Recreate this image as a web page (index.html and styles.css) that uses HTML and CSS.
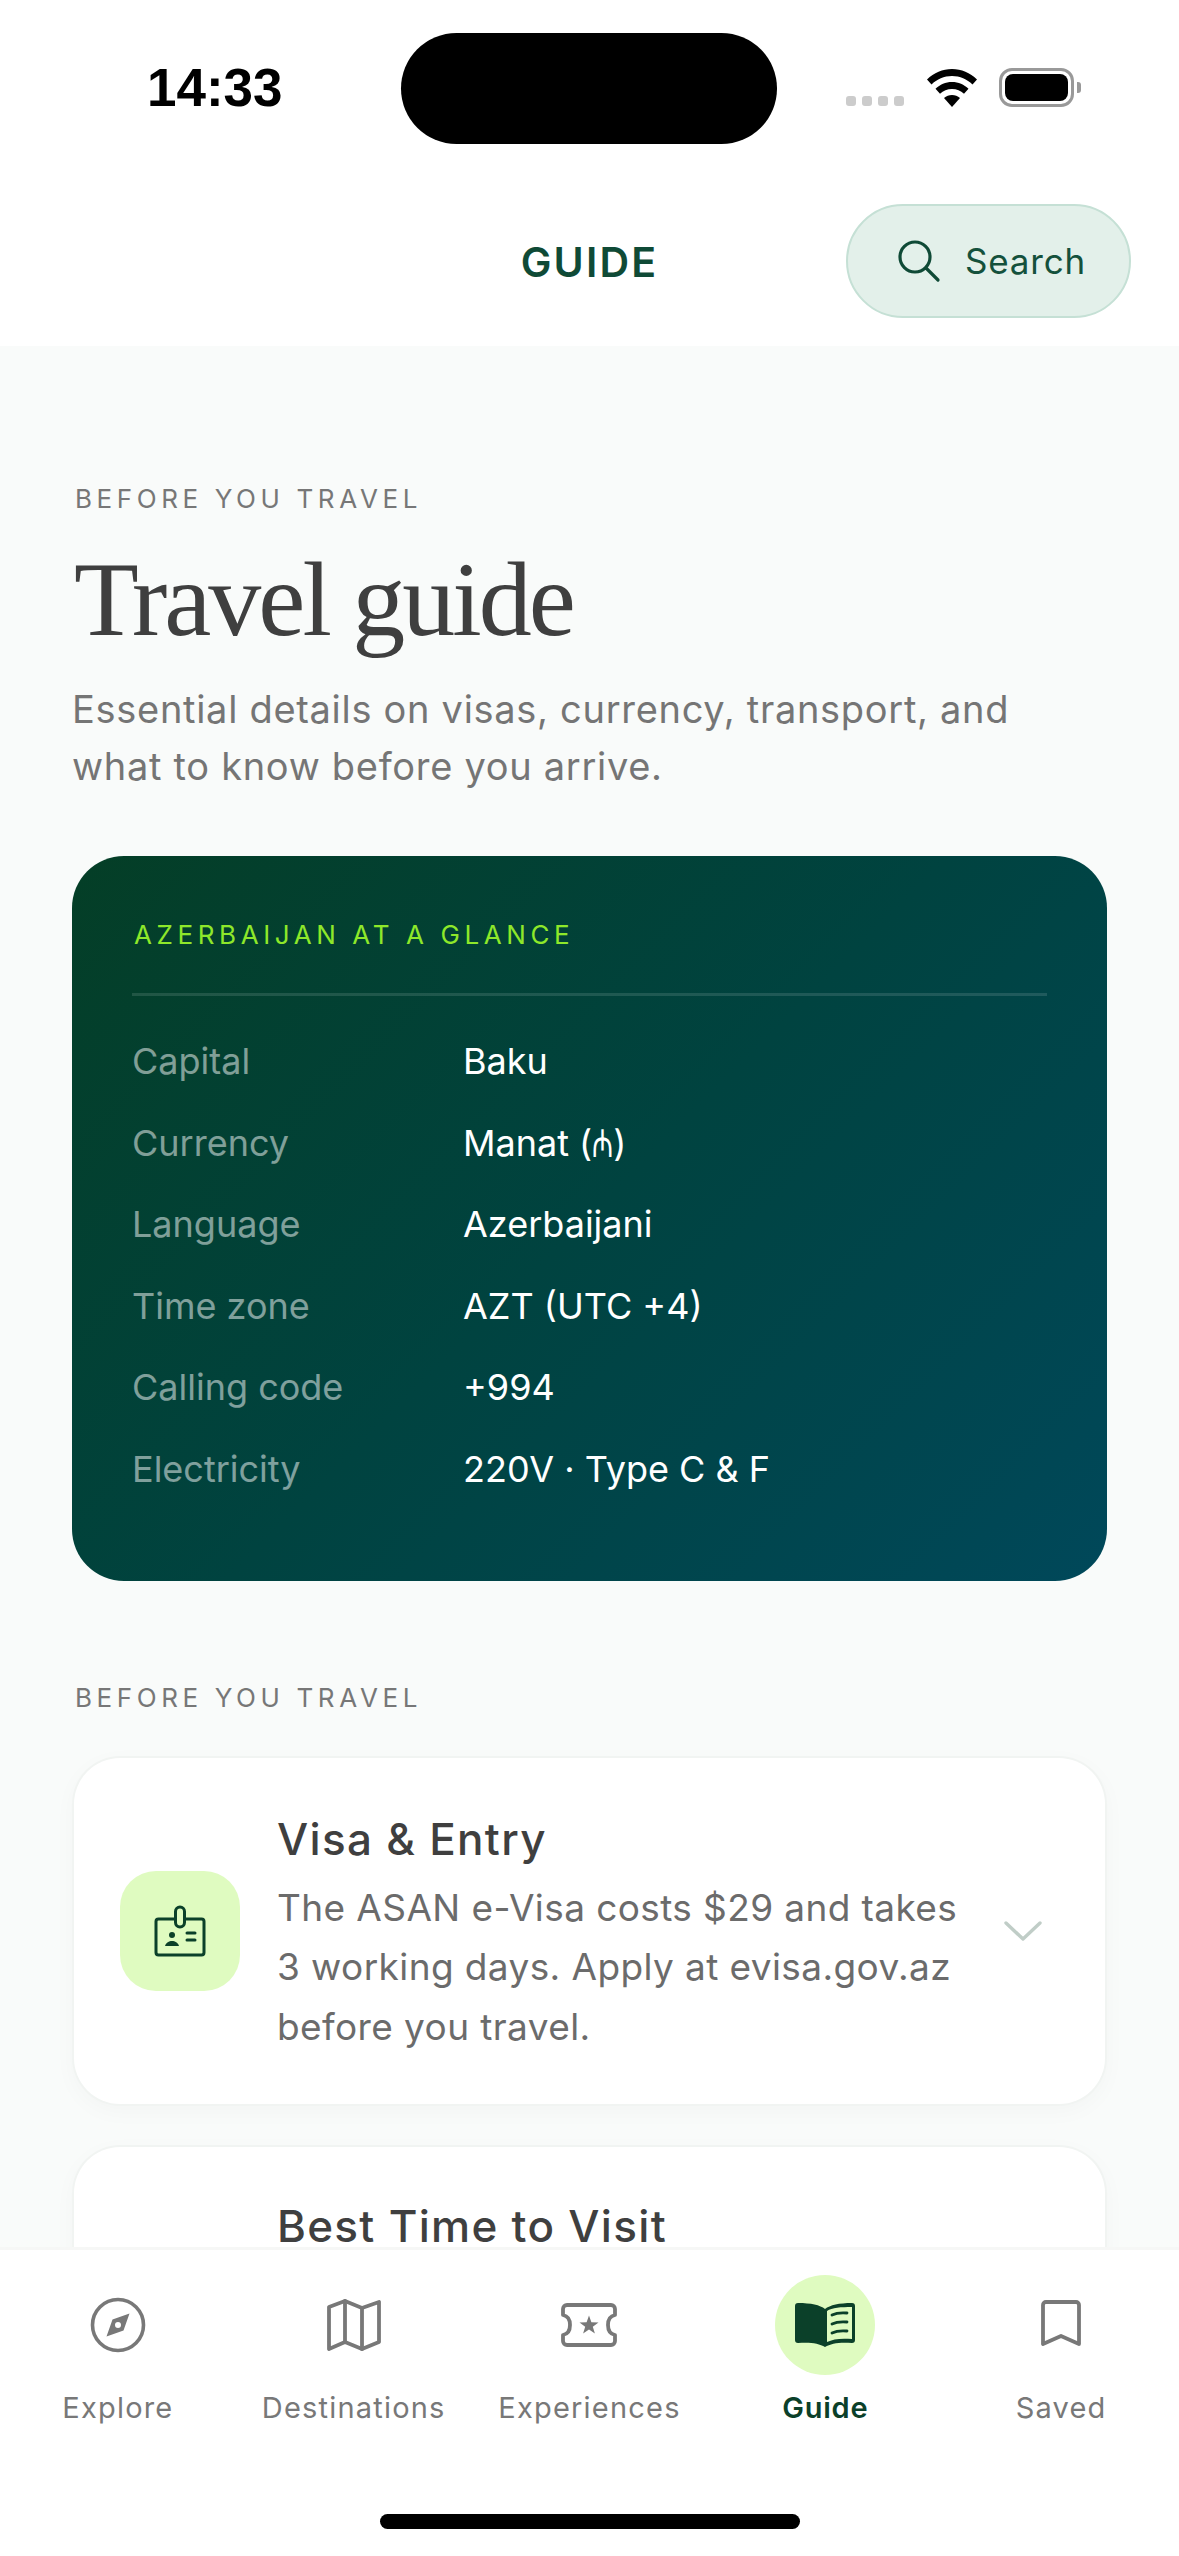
FILE: index.html
```html
<!DOCTYPE html>
<html lang="en">

<head>
    <meta charset="UTF-8">
    <meta name="viewport" content="width=device-width, initial-scale=1.0">
    <title>Guide</title>
    <link rel="stylesheet" href="styles.css">
</head>

<body>
    <div class="phone">
        <!--status bar-->
        <div class="status">
            <span class="time">14:33</span>
            <div class="island"></div>
            <div class="status-icons">
                <div class="dots"><i></i><i></i><i></i><i></i></div>
                <svg class="wifi" width="50" height="38" viewBox="0 0 50 38">
                    <path d="M25 0C15.500 0 7 3.800 0 10.500L4.500 15.500C10 10.200 17 7 25 7S40 10.200 45.500 15.500L50 10.500C43 3.800 34.500 0 25 0Z" />
                    <path d="M25 13C18.500 13 13 15.500 8.500 19.800L13 24.800C16.300 21.700 20.300 20 25 20S33.700 21.700 37 24.800L41.500 19.800C37 15.500 31.500 13 25 13Z" />
                    <path d="M25 26C22 26 19.300 27.100 17 29L25 38L33 29C30.700 27.100 28 26 25 26Z" />
                </svg>
                <div class="battery"><div class="battery-fill"></div></div>
                <div class="battery-nub"></div>
            </div>
        </div>

        <!--header-->
        <header class="header">
            <h1 class="header-title">GUIDE</h1>
            <div class="search">
                <svg width="44" height="44" viewBox="0 0 44 44" fill="none" stroke="#0f4a36" stroke-width="3.200" stroke-linecap="round">
                    <circle cx="18" cy="18" r="15" />
                    <path d="M29 29L41 41" />
                </svg>
                <span>Search</span>
            </div>
        </header>

        <main class="content">
            <p class="eyebrow">BEFORE YOU TRAVEL</p>
            <h2 class="title">Travel guide</h2>
            <p class="lead">Essential details on visas, currency, transport, and what to know before you arrive.</p>

            <!--country facts-->
            <section class="glance">
                <p class="glance-title">AZERBAIJAN AT A GLANCE</p>
                <div class="facts">
                    <div class="fact"><span class="fact-label">Capital</span><span>Baku</span></div>
                    <div class="fact"><span class="fact-label">Currency</span><span>Manat (<span class="manat">₼</span>)</span></div>
                    <div class="fact"><span class="fact-label">Language</span><span>Azerbaijani</span></div>
                    <div class="fact"><span class="fact-label">Time zone</span><span>AZT (UTC +4)</span></div>
                    <div class="fact"><span class="fact-label">Calling code</span><span>+994</span></div>
                    <div class="fact"><span class="fact-label">Electricity</span><span>220V · Type C &amp; F</span></div>
                </div>
            </section>

            <p class="eyebrow section-label">BEFORE YOU TRAVEL</p>

            <div class="item">
                <div class="item-icon">
                    <svg width="52" height="52" viewBox="0 0 52 52" fill="none" stroke="#0b4029" stroke-width="3" stroke-linecap="round" stroke-linejoin="round">
                        <rect x="2" y="14" width="48" height="36" rx="2.500" />
                        <rect x="21.500" y="2" width="9" height="20" rx="4.500" fill="#dffbc0" />
                        <circle cx="18" cy="30" r="3" fill="#0b4029" stroke="none" />
                        <path d="M11 41C12 37.500 15 36 18 36S24 37.500 25 41Z" fill="#0b4029" stroke="none" />
                        <path d="M33 28H41M33 35H41" />
                    </svg>
                </div>
                <div class="item-text">
                    <h3>Visa &amp; Entry</h3>
                    <p>The ASAN e-Visa costs $29 and takes 3 working days. Apply at evisa.gov.az before you travel.</p>
                </div>
                <svg class="chevron" width="38" height="20" viewBox="0 0 38 20" fill="none" stroke="#c0cdc7" stroke-width="3.400" stroke-linecap="round" stroke-linejoin="round">
                    <path d="M2 2L19 18L36 2" />
                </svg>
            </div>

            <div class="item item-next">
                <div class="item-text">
                    <h3>Best Time to Visit</h3>
                </div>
            </div>
        </main>

        <!--tab bar-->
        <nav class="tabs">
            <div class="tab">
                <div class="tab-icon">
                    <svg width="56" height="56" viewBox="0 0 56 56" fill="none" stroke="#787878" stroke-width="3.600">
                        <circle cx="28" cy="28" r="25.500" />
                        <path fill-rule="evenodd" d="M39.500 16.500L33.500 33.500L16.500 39.500L22.500 22.500ZM28 25A3 3 0 1 0 28 31A3 3 0 1 0 28 25Z" fill="#787878" stroke="none" />
                    </svg>
                </div>
                <span>Explore</span>
            </div>
            <div class="tab">
                <div class="tab-icon">
                    <svg width="54" height="52" viewBox="0 0 54 52" fill="none" stroke="#787878" stroke-width="3.800" stroke-linejoin="round" stroke-linecap="round">
                        <path d="M2 8L18 2L35 9L52 3V43L35 50L18 43L2 50Z" />
                        <path d="M18 2V43M35 9V50" />
                    </svg>
                </div>
                <span>Destinations</span>
            </div>
            <div class="tab">
                <div class="tab-icon">
                    <svg width="56" height="46" viewBox="0 0 56 46" fill="none" stroke="#787878" stroke-width="3.800" stroke-linejoin="round">
                        <path d="M6 3H50A4 4 0 0 1 54 7V13C49 14 47 18 47 23S49 32 54 33V39A4 4 0 0 1 50 43H6A4 4 0 0 1 2 39V33C7 32 9 28 9 23S7 14 2 13V7A4 4 0 0 1 6 3Z" />
                        <path d="M28 13.500L30.400 20.300L37.500 20.400L31.800 24.700L33.900 31.600L28 27.500L22.100 31.600L24.200 24.700L18.500 20.400L25.600 20.300Z" fill="#787878" stroke="none" />
                    </svg>
                </div>
                <span>Experiences</span>
            </div>
            <div class="tab tab-active">
                <div class="tab-icon">
                    <svg width="60" height="44" viewBox="0 0 60 44" fill="#0b4029">
                        <path d="M30 6C25 2 16 0 3 0C1 0 0 1 0 3V37C0 39 1 40 3 40C14 39 24 40 30 44Z" />
                        <path fill-rule="evenodd" d="M30 6C35 2 44 0 57 0C59 0 60 1 60 3V37C60 39 59 40 57 40C46 39 36 40 30 44ZM32 8V39C38 36 46 35 57 36V4C46 4 37 4.500 32 8Z" />
                        <path d="M37 12C41 10 46 9.500 52 10M37 21C41 19 46 18.500 52 19M37 30C41 28 46 27.500 52 28" fill="none" stroke="#0b4029" stroke-width="2.800" stroke-linecap="round" />
                    </svg>
                </div>
                <span>Guide</span>
            </div>
            <div class="tab">
                <div class="tab-icon">
                    <svg class="bookmark" width="40" height="46" viewBox="0 0 40 46" fill="none" stroke="#787878" stroke-width="3.800" stroke-linejoin="round">
                        <path d="M5 2H35A3 3 0 0 1 38 5V44L20 36L2 44V5A3 3 0 0 1 5 2Z" />
                    </svg>
                </div>
                <span>Saved</span>
            </div>
        </nav>

        <div class="home-area">
            <div class="home-bar"></div>
        </div>
    </div>
</body>

</html>
```

FILE: styles.css
```css
* {
    box-sizing: border-box;
}

body {
    margin: 0;
    background-color: #fff;
    font-family: Inter, "Noto Sans", sans-serif;
}

p,
h1,
h2,
h3 {
    margin: 0;
}

.phone {
    display: flex;
    flex-direction: column;
    width: 1179px;
    height: 2556px;
    overflow: hidden;
}

/*status bar*/
.status {
    display: flex;
    align-items: flex-start;
    flex: none;
    height: 204px;
    margin-bottom: -204px;
    padding: 33px 0 0 147px;
    position: relative;
    z-index: 1;
}

.time {
    width: 254px;
    margin-top: 25px;
    font-family: "Liberation Sans", sans-serif;
    font-size: 53px;
    line-height: 60px;
    font-weight: 700;
    color: #000;
}

.island {
    width: 376px;
    height: 111px;
    border-radius: 56px;
    background-color: #000;
}

.status-icons {
    display: flex;
    align-items: flex-start;
    margin: 35px 0 0 69px;
}

.dots {
    display: flex;
    gap: 6px;
    margin: 28px 23px 0 0;
}

.dots i {
    width: 10px;
    height: 10px;
    border-radius: 3px;
    background-color: #ccc;
}

.wifi {
    margin: 1px 22px 0 0;
}

.battery {
    width: 75px;
    height: 39px;
    padding: 3px;
    border: 3px solid #999;
    border-radius: 13px;
}

.battery-fill {
    height: 100%;
    border-radius: 8px;
    background-color: #000;
}

.battery-nub {
    width: 4px;
    height: 11px;
    margin: 14px 0 0 3px;
    border-radius: 0 3px 3px 0;
    background-color: #999;
}

/*header*/
.header {
    display: flex;
    align-items: center;
    justify-content: center;
    flex: none;
    height: 346px;
    padding-top: 204px;
    padding-bottom: 26px;
    position: relative;
    background-color: #fff;
}

.header-title {
    font-size: 41px;
    line-height: 50px;
    font-weight: 600;
    letter-spacing: 2.200px;
    color: #0f4a36;
}

.search {
    display: flex;
    align-items: center;
    gap: 24px;
    width: 285px;
    height: 114px;
    padding-left: 49px;
    position: absolute;
    top: 204px;
    right: 48px;
    border: 2.500px solid #c5e0d5;
    border-radius: 57px;
    background-color: #e3f0ea;
    font-size: 35px;
    letter-spacing: 0.800px;
    color: #14513c;
}

/*main content*/
.content {
    flex: 1;
    min-height: 0;
    padding: 138px 72px 0;
    overflow: hidden;
    background-color: #f9fbfa;
}

.eyebrow {
    margin-left: 3px;
    font-size: 26px;
    line-height: 30px;
    letter-spacing: 4.600px;
    color: #777;
}

.title {
    margin: 26px 0 0 2px;
    font-family: "Liberation Serif", serif;
    font-size: 106px;
    line-height: 120px;
    font-weight: 400;
    letter-spacing: -3px;
    color: #3f3f3f;
}

.lead {
    width: 960px;
    margin-top: 21px;
    font-size: 38px;
    line-height: 57px;
    letter-spacing: 0.700px;
    color: #757575;
}

.glance {
    height: 725px;
    margin-top: 61px;
    padding: 64px 60px 0;
    border-radius: 52px;
    background: linear-gradient(135deg, #043e26, #004340 50%, #00485a);
}

.glance-title {
    padding: 0 0 43px 2px;
    border-bottom: 3px solid rgba(255, 255, 255, 0.12);
    font-size: 26px;
    line-height: 30px;
    letter-spacing: 4.600px;
    color: #8ee82a;
}

.facts {
    display: flex;
    flex-direction: column;
    gap: 37px;
    margin-top: 43px;
}

.fact {
    display: flex;
    font-size: 36px;
    line-height: 44.500px;
    color: #fff;
}

.fact-label {
    width: 331px;
    color: rgba(255, 255, 255, 0.5);
}

/*the rupee-like manat sign is tall and narrow in the original font*/
.manat {
    display: inline-block;
    font-family: "DejaVu Sans", sans-serif;
    font-size: 26px;
    line-height: 26px;
    transform: scaleY(1.5);
    transform-origin: 50% 80%;
}

.section-label {
    margin-top: 102px;
}

.item {
    display: flex;
    align-items: center;
    flex: none;
    width: 1031px;
    height: 346px;
    margin: 43px 0 0 2px;
    padding-left: 46px;
    border-radius: 46px;
    background-color: #fff;
    box-shadow: 0 0 0 2px #f1f4f2, 0 6px 24px rgba(0, 0, 0, 0.03);
}

.section-label + .item {
    margin-top: 45px;
}

.item-icon {
    display: flex;
    align-items: center;
    justify-content: center;
    flex: none;
    width: 120px;
    height: 120px;
    margin-right: 37px;
    border-radius: 36px;
    background-color: #dffbc0;
}

.item-text {
    flex: 1;
    padding-top: 8px;
}

.item-text h3 {
    font-size: 44px;
    line-height: 50px;
    font-weight: 500;
    letter-spacing: 1.300px;
    color: #3f3f3f;
}

.item-text p {
    margin-top: 14px;
    font-size: 37px;
    line-height: 59.500px;
    letter-spacing: 0.400px;
    color: #6b6b6b;
}

.chevron {
    flex: none;
    margin: 0 63px 0 44px;
}

.item-next {
    align-items: flex-start;
    padding: 49px 0 0 203px;
}

.item-next h3 {
    line-height: 44px;
}

/*tab bar*/
.tabs {
    display: grid;
    grid-template-columns: repeat(5, 1fr);
    flex: none;
    height: 309px;
    padding-top: 25px;
    border-top: 3px solid #f6f7f6;
    background-color: #fff;
}

.tab {
    display: flex;
    flex-direction: column;
    align-items: center;
    font-size: 29px;
    line-height: 36px;
    letter-spacing: 1.200px;
    color: #787878;
}

.tab-icon {
    display: flex;
    align-items: center;
    justify-content: center;
    width: 100px;
    height: 100px;
    margin-bottom: 15px;
    border-radius: 50%;
}

.bookmark {
    margin-bottom: 4px;
}

.tab-active {
    font-weight: 600;
    letter-spacing: 0.800px;
    color: #0b4029;
}

.tab-active .tab-icon {
    background-color: #dffbc0;
}

.home-area {
    display: flex;
    justify-content: center;
    flex: none;
    height: 0;
}

.home-bar {
    flex: none;
    width: 420px;
    height: 15px;
    margin-top: -42px;
    border-radius: 8px;
    background-color: #000;
}
```
